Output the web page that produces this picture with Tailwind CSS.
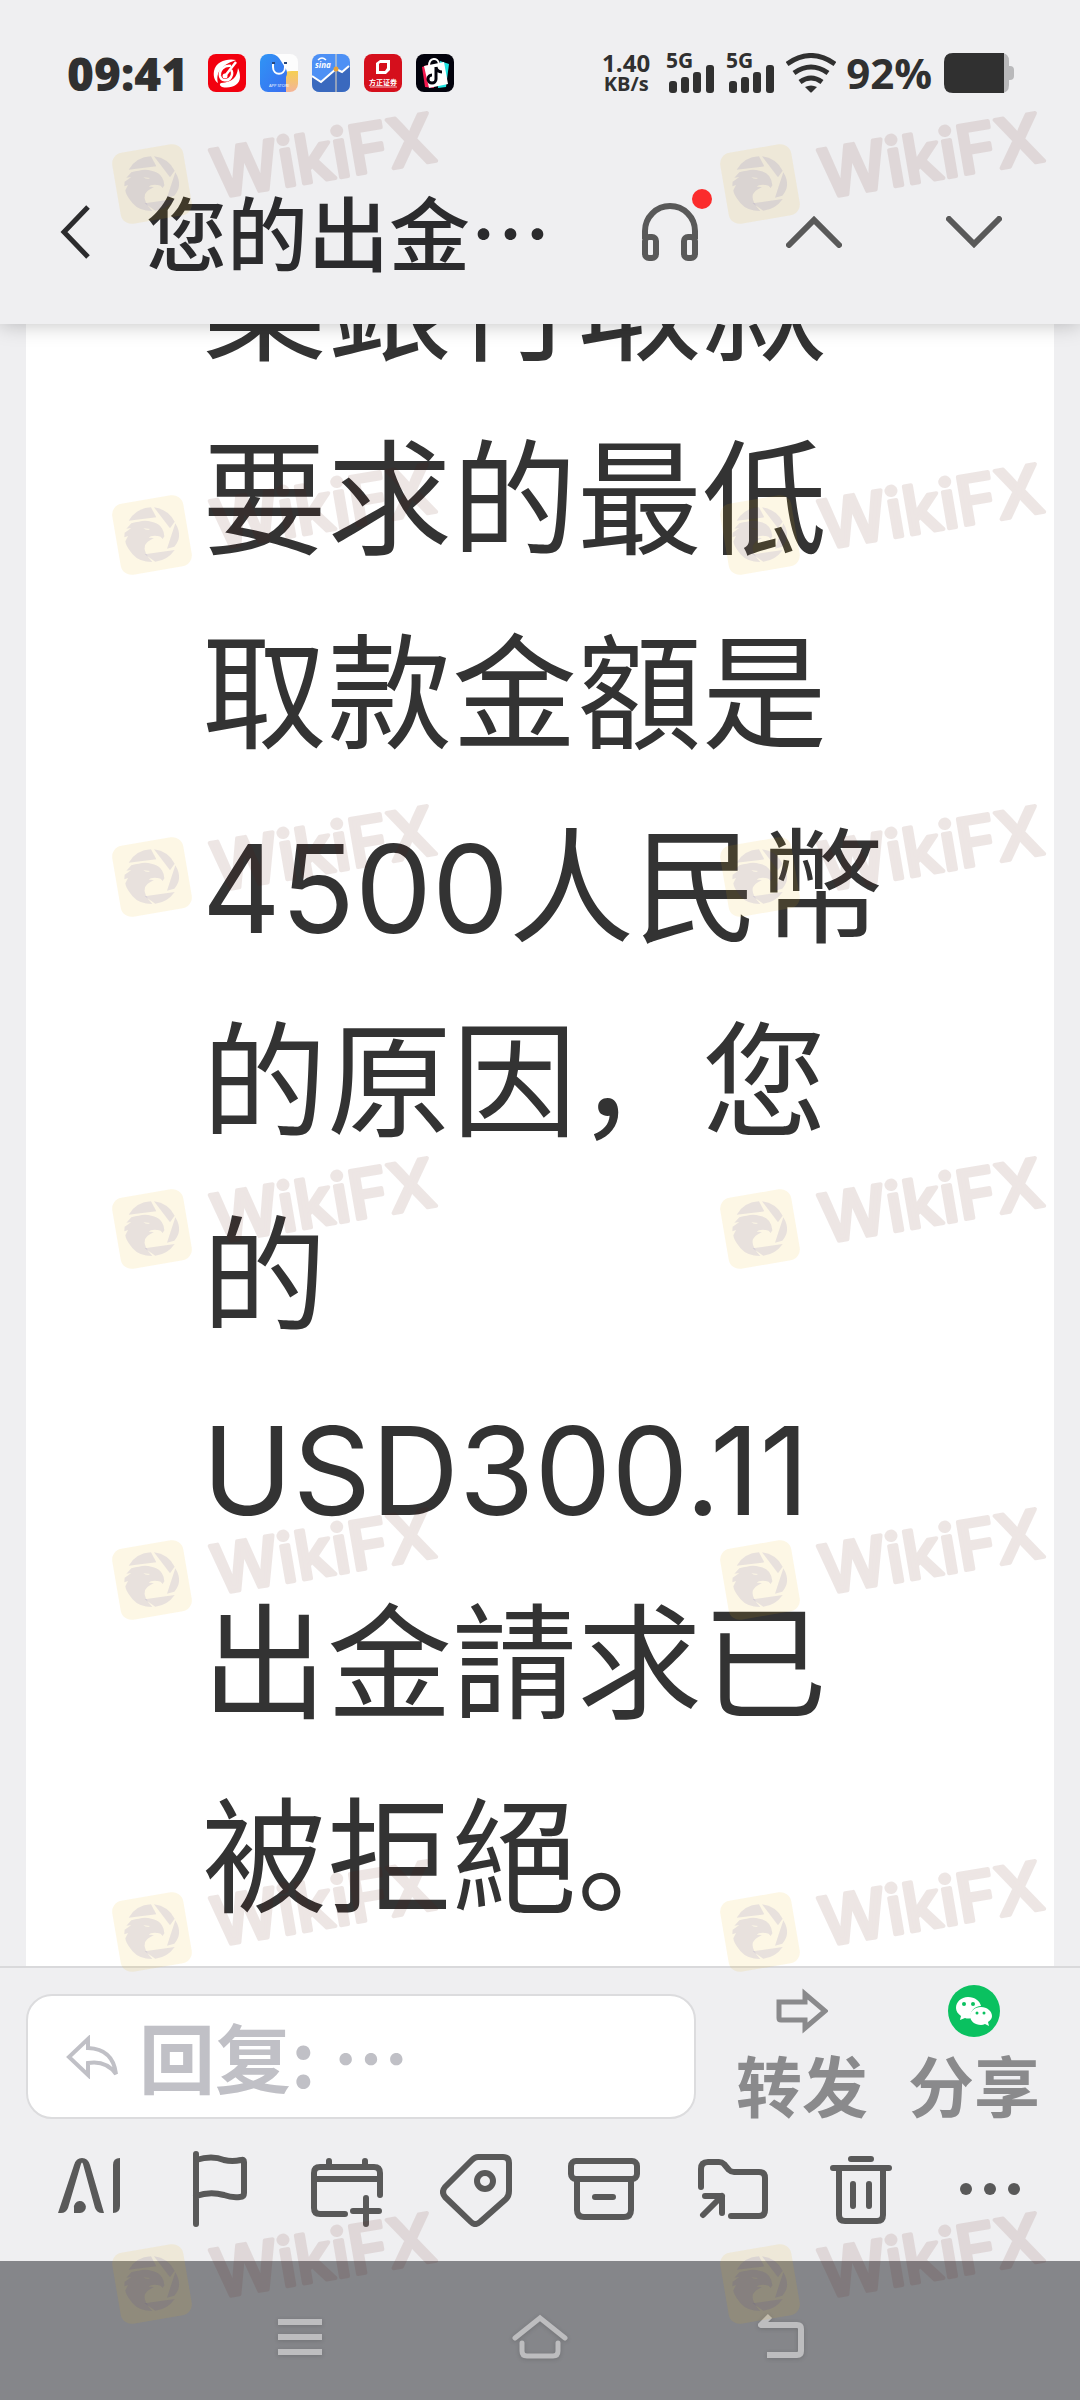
<!DOCTYPE html>
<html lang="zh-CN">
<head>
  <meta charset="UTF-8">
  <meta name="viewport" content="width=device-width, initial-scale=1.0">
  <title>您的出金</title>
  <script src="https://cdn.jsdelivr.net/npm/@tailwindcss/browser@4"></script>
</head>
<body class="relative flex flex-col h-screen overflow-hidden bg-[#efeff1] font-['Noto_Sans_CJK_SC',sans-serif]">

  <!-- HEADER -->
  <header class="relative z-10 shrink-0 bg-[#efeff1] pt-[45px] pb-8 shadow-[0_0_20px_rgba(0,0,0,0.25)]">

    <!-- status bar -->
    <div class="flex items-center justify-between h-14 pl-[67px] pr-[66px] text-[#303030] font-['Open_Sans',sans-serif] font-bold">
      <div class="flex items-center gap-[14px]">
        <span class="w-[127px] text-[46px] leading-none font-extrabold">09:41</span>
        <svg class="w-[38px] h-[38px]" viewBox="0 0 38 38">
          <rect width="38" height="38" rx="8" fill="#f2000f"/>
          <path d="M28 6c-8-2-20 1-22 11-1 6 1 10 4 12-2-9 1-17 18-23z" fill="#fff"/>
          <path d="M14 33c9 2 18-2 18-10 0-4-1-7-2-9-1 9-5 14-17 15-2 1-1 3 1 4z" fill="#fff"/>
          <path d="M23 12c-7-1-12 4-11 10 1 5 8 6 11 1 2-3 1-6 0-7" fill="none" stroke="#fff" stroke-width="2.500"/>
          <path d="M28 8L17 22" stroke="#fff" stroke-width="2.500"/>
          <circle cx="17" cy="22" r="2.500" fill="#fff"/>
        </svg>
        <svg class="w-[38px] h-[38px]" viewBox="0 0 38 38">
          <defs>
            <linearGradient id="storeBlue" x1="0" y1="0" x2="1" y2="1"><stop offset="0" stop-color="#2f95f5"/><stop offset="1" stop-color="#3b6df0"/></linearGradient>
            <linearGradient id="storeWarm" x1="0" y1="0" x2="0" y2="1"><stop offset="0" stop-color="#f5cf52"/><stop offset="1" stop-color="#f3b49a"/></linearGradient>
            <clipPath id="storeClip"><rect width="38" height="38" rx="8"/></clipPath>
          </defs>
          <g clip-path="url(#storeClip)">
            <rect width="38" height="38" fill="#fdfdfd"/>
            <path d="M20 38V22q4-5 12-5h6v21z" fill="url(#storeWarm)"/>
            <path d="M0 0h12q6 1 9 7l5 8q2 4 0 8v15H0z" fill="url(#storeBlue)"/>
          </g>
          <path d="M13 9v4c0 9 12 9 12 0V9" fill="none" stroke="#fff" stroke-width="2"/>
          <path d="M12 9h3M24 9h3" stroke="#27477d" stroke-width="2"/>
          <text x="9" y="33" font-size="4" font-weight="400" fill="#fff">APP STORE</text>
        </svg>
        <svg class="w-[38px] h-[38px]" viewBox="0 0 38 38">
          <rect width="38" height="38" rx="8" fill="#4d90f5"/>
          <path d="M0 23l9 5 15-13 6 3 8-6v18q0 8-8 8H8q-8 0-8-8z" fill="#3a69be"/>
          <path d="M0 22l9 6 15-13 6 3 7-6" fill="none" stroke="#fff" stroke-width="2"/>
          <path d="M24 0v38" stroke="#ead9b8"/>
          <circle cx="24" cy="15" r="2.500" fill="#e8a33c"/>
          <text x="3" y="14" font-size="8" font-style="italic" fill="#fff">sina</text>
          <path d="M6 6q4-4 8 0" fill="none" stroke="#fff" stroke-width="1.500"/>
        </svg>
        <svg class="w-[38px] h-[38px]" viewBox="0 0 38 38">
          <rect width="38" height="38" rx="8" fill="#d50f1c"/>
          <path d="M12 9l4-3h10v10l-4 4H12zM15 10v7h6l2-3V9h-7z" fill="#fff" fill-rule="evenodd"/>
          <text x="19" y="31" font-size="7" text-anchor="middle" fill="#fff" font-family="Noto Sans CJK SC">方正证券</text>
          <path d="M6 33h27" stroke="#f1b5b8"/>
        </svg>
        <svg class="w-[38px] h-[38px]" viewBox="0 0 38 38">
          <rect width="38" height="38" rx="8" fill="#03030d"/>
          <path d="M6 13l8-3 4 24-9-1z" fill="#f5184f"/>
          <path d="M24 7l9 3-3 23-8 1z" fill="#1fe6e3"/>
          <path d="M8 12l20-4 4 22-19 4z" fill="#fff"/>
          <path d="M13 12c0-9 9-9 10-2" fill="none" stroke="#fff" stroke-width="2"/>
          <path d="M20 13v12a4 4 0 1 1-4-4M20 13q1 5 6 5" fill="none" stroke="#03030d" stroke-width="3"/>
        </svg>
      </div>

      <div class="flex items-center">
        <div class="flex flex-col items-center mr-4 leading-none">
          <span class="text-[24px] leading-[22px]">1.40</span>
          <span class="text-[20px] leading-[20px]">KB/s</span>
        </div>
        <svg class="w-12 h-10 mr-3 overflow-visible" viewBox="0 0 48 40" fill="#303030">
          <text x="0" y="15" font-size="21">5G</text>
          <rect x="3" y="28" width="8" height="12" rx="3"/><rect x="15" y="24" width="8" height="16" rx="3"/><rect x="27" y="19" width="8" height="21" rx="3"/><rect x="40" y="12" width="8" height="28" rx="3"/>
        </svg>
        <svg class="w-12 h-10 mr-3 overflow-visible" viewBox="0 0 48 40" fill="#303030">
          <text x="0" y="15" font-size="21">5G</text>
          <rect x="3" y="28" width="8" height="12" rx="3"/><rect x="15" y="24" width="8" height="16" rx="3"/><rect x="27" y="19" width="8" height="21" rx="3"/><rect x="40" y="12" width="8" height="28" rx="3"/>
        </svg>
        <svg class="w-[50px] h-10 mr-[10px]" viewBox="0 0 50 40" fill="none" stroke="#303030" stroke-width="5">
          <path d="M1 11Q25-6 49 11M8 20Q25 8 42 20M14 29Q25 21 36 29"/>
          <path d="M19 34q6-3 12 0l-5 5q-1 1-2 0z" fill="#303030" stroke="none"/>
        </svg>
        <span class="text-[42px] leading-none mr-3">92%</span>
        <svg class="w-[70px] h-10" viewBox="0 0 70 40">
          <path d="M56 0h1q8 0 8 8v5h1q4 0 4 4v6q0 4-4 4h-1v5q0 8-8 8h-1z" fill="#b9b9bb"/>
          <path d="M60 0H9Q0 0 0 9v22q0 9 9 9h51z" fill="#303030"/>
        </svg>
      </div>
    </div>

    <!-- title row -->
    <div class="flex items-center h-[120px] mt-[71px] pl-[60px] pr-[26px]">
      <button type="button" aria-label="返回" class="w-[86px]">
        <svg class="w-8 h-[54px]" viewBox="0 0 32 54" fill="none" stroke="#2b2b2d" stroke-width="5"><path d="M28 2L4 27l24 25"/></svg>
      </button>
      <h1 class="flex-1 pb-1 text-[81px] leading-[116px] font-medium text-[#2b2b2d] whitespace-nowrap">您的出金…</h1>
      <button type="button" aria-label="客服" class="relative flex justify-center w-32">
        <svg class="w-14 h-[58px]" viewBox="0 0 56 58" fill="none" stroke="#595959" stroke-width="6">
          <path d="M3 36V28a25 25 0 0 1 50 0v8"/>
          <rect x="3" y="34" width="11" height="21" rx="4"/>
          <rect x="42" y="34" width="11" height="21" rx="4"/>
        </svg>
        <span class="absolute -top-[14px] right-[22px] size-5 rounded-full bg-[#fb2c2c]"></span>
      </button>
      <button type="button" aria-label="上一封" class="flex justify-center w-40">
        <svg class="w-14 h-8" viewBox="0 0 56 32" fill="none" stroke="#595959" stroke-width="6" stroke-linecap="round"><path d="M3 29L28 4l25 25"/></svg>
      </button>
      <button type="button" aria-label="下一封" class="flex justify-center w-40">
        <svg class="w-14 h-8" viewBox="0 0 56 32" fill="none" stroke="#595959" stroke-width="6" stroke-linecap="round"><path d="M3 3l25 25L53 3"/></svg>
      </button>
    </div>
  </header>

  <!-- MAIL BODY -->
  <main class="flex flex-col justify-end flex-1 min-h-0 overflow-hidden mx-[26px] bg-white">
    <p class="pl-[176px] pr-[140px] pb-5 text-[125px] leading-[194px] text-[#333333]">業銀行取款要求的最低取款金額是<span class="text-[122px] leading-none font-['Inter',sans-serif]">4500</span>人民幣的原因，您的<span class="text-[122px] leading-none font-['Inter',sans-serif]">USD300.11</span>出金請求已被拒絕。</p>
  </main>

  <!-- REPLY + TOOLBAR -->
  <footer class="shrink-0 border-t-2 border-[#d9d9db] bg-[#efeff1] px-[26px]">
    <div class="flex items-start pt-[17px]">
      <label class="flex items-center flex-1 min-w-0 h-[125px] mt-[9px] mr-8 pl-[38px] bg-white border-2 border-[#dcdcde] rounded-[26px]">
        <svg class="w-[52px] h-[44px] shrink-0" viewBox="0 0 52 44" fill="none" stroke="#c0c0c6" stroke-width="4"><path d="M22 4L3 22l19 18V28q18-3 28 11Q47 14 22 13z"/></svg>
        <input type="text" aria-label="回复" placeholder="回复: …" class="flex-1 min-w-0 ml-[21px] pb-1 text-[76px] leading-[106px] h-[110px] font-bold outline-none placeholder:text-[#c0c0c6]">
      </label>
      <button type="button" class="flex flex-col items-center w-[148px] text-[66px] leading-[76px] font-bold text-[#8a8a8c]">
        <svg class="size-[52px] mb-2" viewBox="0 -4 52 52" fill="none" stroke="#8a8a8c" stroke-width="5"><path d="M3 13h26V5l20 17-20 17v-8H5q-2 0-2-2z"/></svg>
        转发
      </button>
      <button type="button" class="flex flex-col items-center w-[148px] ml-6 mr-[6px] text-[66px] leading-[76px] font-bold text-[#8a8a8c]">
        <svg class="size-[52px] mb-2" viewBox="0 0 52 52">
          <circle cx="26" cy="26" r="26" fill="#0ac160"/>
          <path d="M20 12c-7 0-12 5-12 11 0 3 2 6 5 8l-1 4 5-2q3 1 6 0c-2-7 4-12 10-12-1-5-6-9-13-9z" fill="#fff"/>
          <path d="M33 22c-6 0-11 4-11 9s5 9 11 9q2 0 4-1l4 2-1-4c3-2 4-4 4-6 0-5-5-9-11-9z" fill="#fff"/>
          <g fill="#0ac160"><circle cx="16" cy="19" r="2"/><circle cx="25" cy="19" r="2"/><circle cx="29" cy="28" r="1.500"/><circle cx="36" cy="28" r="1.500"/></g>
        </svg>
        分享
      </button>
    </div>

    <div class="grid grid-cols-8 items-center justify-items-center h-20 mt-[26px] mb-[34px]">
      <button type="button" aria-label="AI">
        <svg class="w-[72px] h-20" viewBox="0 0 72 80" fill="#595959">
          <path d="M4 66l16-48q2-7 8-7t8 7l14 48h-2q-5 0-7-5L29 17q-1-3-2 0L14 61q-2 5-7 5zM59 66V18q0-7 7-7v48q0 7-7 7z"/>
          <path d="M20 66v-5a6 6 0 1 1 6 5z"/>
        </svg>
      </button>
      <button type="button" aria-label="标记">
        <svg class="w-[72px] h-20" viewBox="0 0 72 80" fill="none" stroke="#595959" stroke-width="6" stroke-linecap="round" stroke-linejoin="round"><path d="M13 7v70M13 13q16-5 28 0 8 2 17 0 3-1 3 2v31q0 4-4 4-8 1-16-2-14-4-28 1"/></svg>
      </button>
      <button type="button" aria-label="日程">
        <svg class="w-[72px] h-20" viewBox="0 0 72 80" fill="none" stroke="#595959" stroke-width="6" stroke-linecap="round"><path d="M34 67H9q-6 0-6-6V26q0-6 6-6h54q6 0 6 6v22M4 32h64M18 14v6M54 14v6M55 51v26M42 64h26"/></svg>
      </button>
      <button type="button" aria-label="标签">
        <svg class="w-[72px] h-20" viewBox="0 0 72 80" fill="none" stroke="#595959" stroke-width="6" stroke-linejoin="round"><path d="M38 10h25q6 0 6 6v28q0 5-3 8L40 75q-5 4-9 0L5 50q-4-5 0-10l27-27q3-3 6-3z"/><circle cx="45" cy="34" r="8"/></svg>
      </button>
      <button type="button" aria-label="归档">
        <svg class="w-[72px] h-20" viewBox="0 0 72 80" fill="none" stroke="#595959" stroke-width="6" stroke-linecap="round"><rect x="3" y="14" width="66" height="18" rx="5"/><path d="M9 33v30q0 7 7 7h40q7 0 7-7V33M27 50h18"/></svg>
      </button>
      <button type="button" aria-label="移动">
        <svg class="w-[72px] h-20" viewBox="0 0 72 80" fill="none" stroke="#595959" stroke-width="6" stroke-linecap="round" stroke-linejoin="round"><path d="M4 40V22q0-7 7-7h11q3 0 5 2l5 6q2 2 5 2h25q6 0 6 6v32q0 6-6 6H34M8 49h17v17M25 49L6 68"/></svg>
      </button>
      <button type="button" aria-label="删除">
        <svg class="w-[72px] h-20" viewBox="0 0 72 80" fill="none" stroke="#595959" stroke-width="6" stroke-linecap="round"><path d="M8 21h56M26 12h20M14 22v46q0 6 6 6h32q6 0 6-6V22M28 37v22M44 37v22"/></svg>
      </button>
      <button type="button" aria-label="更多">
        <svg class="w-[72px] h-20" viewBox="0 0 72 80" fill="#595959"><circle cx="12" cy="42" r="6"/><circle cx="36" cy="42" r="6"/><circle cx="60" cy="42" r="6"/></svg>
      </button>
    </div>
  </footer>

  <!-- SYSTEM NAV -->
  <nav class="shrink-0 grid grid-cols-3 items-center justify-items-center h-[139px] pt-2 px-[180px] bg-[#85868a]">
    <button type="button" aria-label="菜单">
      <svg class="size-14 drop-shadow-sm" viewBox="0 0 56 56" stroke="#bdbdbf" stroke-width="6"><path d="M6 15h44M6 30h44M6 45h44"/></svg>
    </button>
    <button type="button" aria-label="主页">
      <svg class="size-14 drop-shadow-sm" viewBox="0 0 56 56" fill="none" stroke="#bdbdbf" stroke-width="5" stroke-linecap="round"><path d="M3 31l25-20 25 20M10 36v8q0 5 5 5h26q5 0 5-5v-8"/></svg>
    </button>
    <button type="button" aria-label="后退">
      <svg class="size-14 drop-shadow-sm" viewBox="0 0 56 56" fill="none" stroke="#bdbdbf" stroke-width="6" stroke-linejoin="round"><path d="M18 9l-9 9h36q4 0 4 4v22q0 4-4 4H15"/></svg>
    </button>
  </nav>

  <!-- WATERMARK -->
  <svg class="absolute top-0 left-0 z-20 w-full pointer-events-none" viewBox="0 0 1080 2400">
    <defs>
      <g id="wm">
        <g transform="rotate(-9.700)">
          <rect x="-36" y="-36" width="72" height="72" rx="11" fill="#ecb812" fill-opacity=".11"/>
          <g opacity=".1"><text x="61" y="25" font-size="67" font-weight="500" font-family="Inter" fill="#5a1208" stroke="#5a1208" stroke-width="4" stroke-linejoin="round">WikiFX</text></g>
        </g>
        <g transform="scale(.3333) translate(-600 -253)" fill="#3528a0" fill-opacity=".1">
          <path d="M530 210a82 82 0 0 1 67-40l16 30z"/>
          <path d="M606 170a82 82 0 0 1 62 43l-14 20z"/>
          <path d="M670 218q24 40-3 70l-22 6z"/>
          <path d="M668 298a82 82 0 0 1-58 35l-32-22z"/>
          <path d="M601 334q-40 0-60-24t-21-38l8-16-11 4 1-14 20-14-15 2 15-16q12-5 22-5 20-6 38 0 36 6 39 44l-5 8q-6-10-16-9-20-2-26 5l16 1q-24 12-27 22-7 20 22 50zM574 233q12 8 20 2l-6-1z" fill-rule="evenodd"/>
        </g>
      </g>
    </defs>
    <use href="#wm" x="152" y="184"/><use href="#wm" x="760" y="184"/>
    <use href="#wm" x="152" y="535"/><use href="#wm" x="760" y="535"/>
    <use href="#wm" x="152" y="877"/><use href="#wm" x="760" y="877"/>
    <use href="#wm" x="152" y="1229"/><use href="#wm" x="760" y="1229"/>
    <use href="#wm" x="152" y="1580"/><use href="#wm" x="760" y="1580"/>
    <use href="#wm" x="152" y="1932"/><use href="#wm" x="760" y="1932"/>
    <use href="#wm" x="152" y="2284"/><use href="#wm" x="760" y="2284"/>
  </svg>

</body>
</html>
